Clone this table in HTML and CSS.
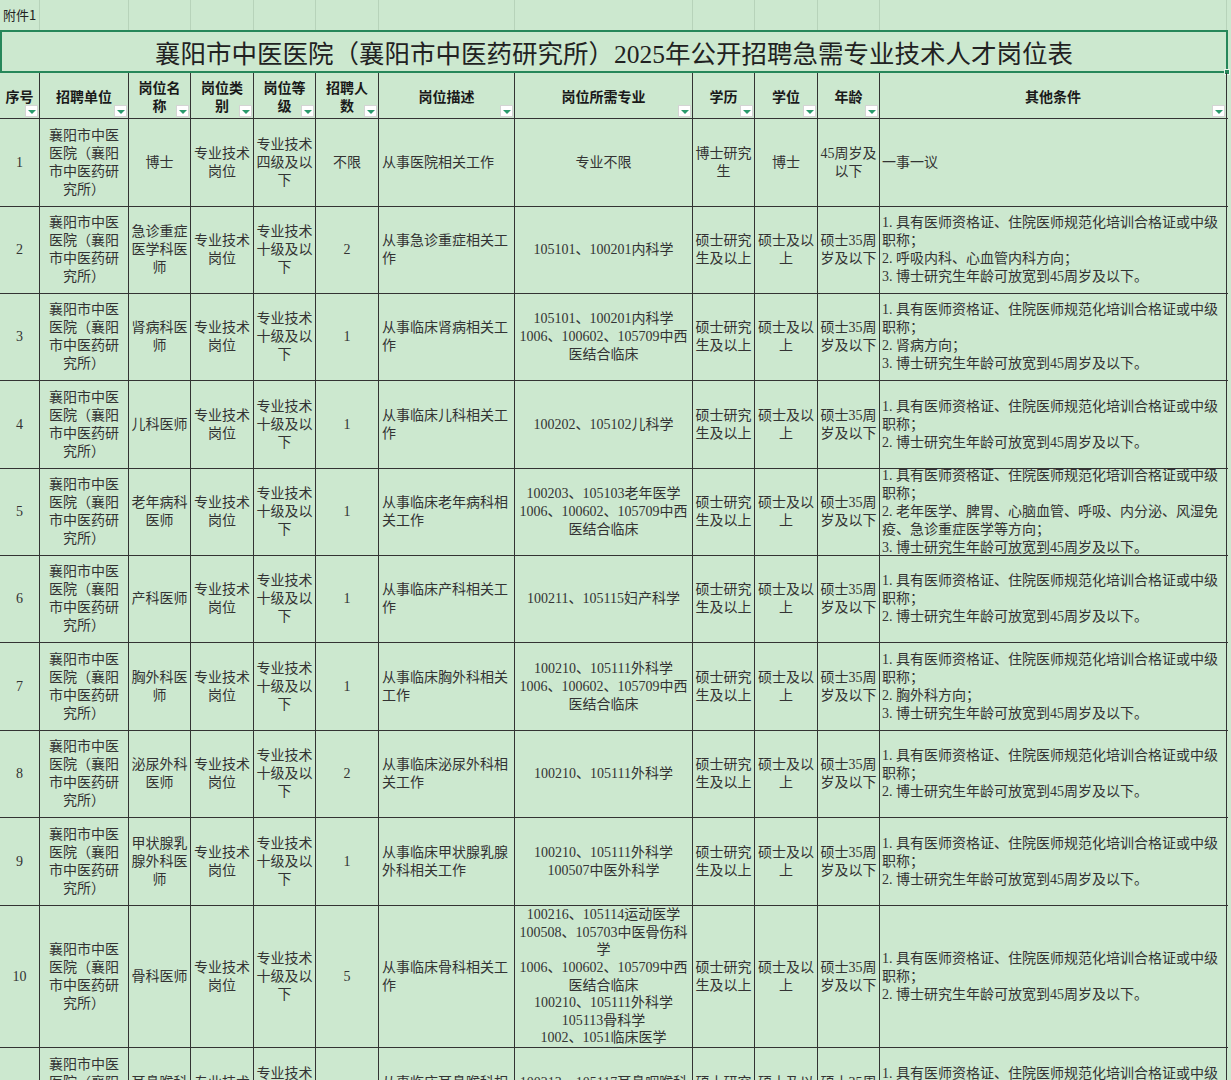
FILE: index.html
```html
<!DOCTYPE html>
<html lang="zh-CN">
<head>
<meta charset="utf-8">
<title>岗位表</title>
<link rel="stylesheet" href="styles.css">
</head>
<body>
<div class="sheet">
  <div class="row pre">
    <div class="annex">附件1</div><div></div><div></div><div></div><div></div><div></div><div></div><div></div><div></div><div></div><div></div><div></div>
  </div>
  <div class="title">襄阳市中医医院（襄阳市中医药研究所）2025年公开招聘急需专业技术人才岗位表<span class="handle"></span></div>
  <div class="row head">
    <div class="h narrow">序号<span class="f"></span></div>
    <div class="h">招聘单位<span class="f"></span></div>
    <div class="h">岗位名称<span class="f"></span></div>
    <div class="h">岗位类别<span class="f"></span></div>
    <div class="h">岗位等级<span class="f"></span></div>
    <div class="h">招聘人数<span class="f"></span></div>
    <div class="h">岗位描述<span class="f"></span></div>
    <div class="h">岗位所需专业<span class="f"></span></div>
    <div class="h">学历<span class="f"></span></div>
    <div class="h">学位<span class="f"></span></div>
    <div class="h">年龄<span class="f"></span></div>
    <div class="h">其他条件<span class="f"></span></div>
  </div>

  <div class="row data r88">
    <div class="c">1</div>
    <div class="c unit">襄阳市中医医院（襄阳市中医药研究所）</div>
    <div class="c">博士</div>
    <div class="c">专业技术岗位</div>
    <div class="c">专业技术四级及以下</div>
    <div class="c">不限</div>
    <div class="c l">从事医院相关工作</div>
    <div class="c">专业不限</div>
    <div class="c">博士研究生</div>
    <div class="c">博士</div>
    <div class="c">45周岁及以下</div>
    <div class="c o">一事一议</div>
  </div>

  <div class="row data r87">
    <div class="c">2</div>
    <div class="c unit">襄阳市中医医院（襄阳市中医药研究所）</div>
    <div class="c">急诊重症医学科医师</div>
    <div class="c">专业技术岗位</div>
    <div class="c">专业技术十级及以下</div>
    <div class="c">2</div>
    <div class="c l">从事急诊重症相关工作</div>
    <div class="c">105101、100201内科学</div>
    <div class="c">硕士研究生及以上</div>
    <div class="c">硕士及以上</div>
    <div class="c">硕士35周岁及以下</div>
    <div class="c o">1. 具有医师资格证、住院医师规范化培训合格证或中级职称；<br>2. 呼吸内科、心血管内科方向；<br>3. 博士研究生年龄可放宽到45周岁及以下。</div>
  </div>

  <div class="row data r87">
    <div class="c">3</div>
    <div class="c unit">襄阳市中医医院（襄阳市中医药研究所）</div>
    <div class="c">肾病科医师</div>
    <div class="c">专业技术岗位</div>
    <div class="c">专业技术十级及以下</div>
    <div class="c">1</div>
    <div class="c l">从事临床肾病相关工作</div>
    <div class="c">105101、100201内科学<br>1006、100602、105709中西医结合临床</div>
    <div class="c">硕士研究生及以上</div>
    <div class="c">硕士及以上</div>
    <div class="c">硕士35周岁及以下</div>
    <div class="c o">1. 具有医师资格证、住院医师规范化培训合格证或中级职称；<br>2. 肾病方向；<br>3. 博士研究生年龄可放宽到45周岁及以下。</div>
  </div>

  <div class="row data r88">
    <div class="c">4</div>
    <div class="c unit">襄阳市中医医院（襄阳市中医药研究所）</div>
    <div class="c">儿科医师</div>
    <div class="c">专业技术岗位</div>
    <div class="c">专业技术十级及以下</div>
    <div class="c">1</div>
    <div class="c l">从事临床儿科相关工作</div>
    <div class="c">100202、105102儿科学</div>
    <div class="c">硕士研究生及以上</div>
    <div class="c">硕士及以上</div>
    <div class="c">硕士35周岁及以下</div>
    <div class="c o">1. 具有医师资格证、住院医师规范化培训合格证或中级职称；<br>2. 博士研究生年龄可放宽到45周岁及以下。</div>
  </div>

  <div class="row data r87">
    <div class="c">5</div>
    <div class="c unit">襄阳市中医医院（襄阳市中医药研究所）</div>
    <div class="c">老年病科医师</div>
    <div class="c">专业技术岗位</div>
    <div class="c">专业技术十级及以下</div>
    <div class="c">1</div>
    <div class="c l">从事临床老年病科相关工作</div>
    <div class="c">100203、105103老年医学<br>1006、100602、105709中西医结合临床</div>
    <div class="c">硕士研究生及以上</div>
    <div class="c">硕士及以上</div>
    <div class="c">硕士35周岁及以下</div>
    <div class="c o">1. 具有医师资格证、住院医师规范化培训合格证或中级职称；<br>2. 老年医学、脾胃、心脑血管、呼吸、内分泌、风湿免疫、急诊重症医学等方向；<br>3. 博士研究生年龄可放宽到45周岁及以下。</div>
  </div>

  <div class="row data r87">
    <div class="c">6</div>
    <div class="c unit">襄阳市中医医院（襄阳市中医药研究所）</div>
    <div class="c">产科医师</div>
    <div class="c">专业技术岗位</div>
    <div class="c">专业技术十级及以下</div>
    <div class="c">1</div>
    <div class="c l">从事临床产科相关工作</div>
    <div class="c">100211、105115妇产科学</div>
    <div class="c">硕士研究生及以上</div>
    <div class="c">硕士及以上</div>
    <div class="c">硕士35周岁及以下</div>
    <div class="c o">1. 具有医师资格证、住院医师规范化培训合格证或中级职称；<br>2. 博士研究生年龄可放宽到45周岁及以下。</div>
  </div>

  <div class="row data r88">
    <div class="c">7</div>
    <div class="c unit">襄阳市中医医院（襄阳市中医药研究所）</div>
    <div class="c">胸外科医师</div>
    <div class="c">专业技术岗位</div>
    <div class="c">专业技术十级及以下</div>
    <div class="c">1</div>
    <div class="c l">从事临床胸外科相关工作</div>
    <div class="c">100210、105111外科学<br>1006、100602、105709中西医结合临床</div>
    <div class="c">硕士研究生及以上</div>
    <div class="c">硕士及以上</div>
    <div class="c">硕士35周岁及以下</div>
    <div class="c o">1. 具有医师资格证、住院医师规范化培训合格证或中级职称；<br>2. 胸外科方向；<br>3. 博士研究生年龄可放宽到45周岁及以下。</div>
  </div>

  <div class="row data r87">
    <div class="c">8</div>
    <div class="c unit">襄阳市中医医院（襄阳市中医药研究所）</div>
    <div class="c">泌尿外科医师</div>
    <div class="c">专业技术岗位</div>
    <div class="c">专业技术十级及以下</div>
    <div class="c">2</div>
    <div class="c l">从事临床泌尿外科相关工作</div>
    <div class="c">100210、105111外科学</div>
    <div class="c">硕士研究生及以上</div>
    <div class="c">硕士及以上</div>
    <div class="c">硕士35周岁及以下</div>
    <div class="c o">1. 具有医师资格证、住院医师规范化培训合格证或中级职称；<br>2. 博士研究生年龄可放宽到45周岁及以下。</div>
  </div>

  <div class="row data r88">
    <div class="c">9</div>
    <div class="c unit">襄阳市中医医院（襄阳市中医药研究所）</div>
    <div class="c">甲状腺乳腺外科医师</div>
    <div class="c">专业技术岗位</div>
    <div class="c">专业技术十级及以下</div>
    <div class="c">1</div>
    <div class="c l">从事临床甲状腺乳腺外科相关工作</div>
    <div class="c">100210、105111外科学<br>100507中医外科学</div>
    <div class="c">硕士研究生及以上</div>
    <div class="c">硕士及以上</div>
    <div class="c">硕士35周岁及以下</div>
    <div class="c o">1. 具有医师资格证、住院医师规范化培训合格证或中级职称；<br>2. 博士研究生年龄可放宽到45周岁及以下。</div>
  </div>

  <div class="row data r142">
    <div class="c">10</div>
    <div class="c unit">襄阳市中医医院（襄阳市中医药研究所）</div>
    <div class="c">骨科医师</div>
    <div class="c">专业技术岗位</div>
    <div class="c">专业技术十级及以下</div>
    <div class="c">5</div>
    <div class="c l">从事临床骨科相关工作</div>
    <div class="c tight">100216、105114运动医学<br>100508、105703中医骨伤科学<br>1006、100602、105709中西医结合临床<br>100210、105111外科学<br>105113骨科学<br>1002、1051临床医学</div>
    <div class="c">硕士研究生及以上</div>
    <div class="c">硕士及以上</div>
    <div class="c">硕士35周岁及以下</div>
    <div class="c o">1. 具有医师资格证、住院医师规范化培训合格证或中级职称；<br>2. 博士研究生年龄可放宽到45周岁及以下。</div>
  </div>

  <div class="row data r88">
    <div class="c">11</div>
    <div class="c unit">襄阳市中医医院（襄阳市中医药研究所）</div>
    <div class="c">耳鼻喉科医师</div>
    <div class="c">专业技术岗位</div>
    <div class="c">专业技术十级及以下</div>
    <div class="c">1</div>
    <div class="c l">从事临床耳鼻喉科相关工作</div>
    <div class="c">100213、105117耳鼻咽喉科学</div>
    <div class="c">硕士研究生及以上</div>
    <div class="c">硕士及以上</div>
    <div class="c">硕士35周岁及以下</div>
    <div class="c o">1. 具有医师资格证、住院医师规范化培训合格证或中级职称；<br>2. 博士研究生年龄可放宽到45周岁及以下。</div>
  </div>
</div>
</body>
</html>
```

FILE: styles.css
```css
html, body {
  margin: 0;
  padding: 0;
  background: #cce8cf;
}
body {
  font-family: "Liberation Serif", "Noto Sans CJK SC", serif;
  color: #333;
  width: 1231px;
  height: 1080px;
  overflow: hidden;
}
.sheet {
  width: 1228px;
}
.row {
  display: grid;
  grid-template-columns: 40px 89px 62px 63px 62px 63px 136px 178px 62px 63px 62px 347px;
}
.pre {
  height: 30px;
}
.pre > div {
  border-right: 1px solid #b7d3ba;
}
.annex {
  font-family: "Noto Sans CJK SC", sans-serif;
  font-size: 13px;
  line-height: 30px;
  padding-left: 3px;
  color: #222;
  white-space: nowrap;
}
.title {
  position: relative;
  height: 43px;
  box-sizing: border-box;
  border: 2px solid #26875a;
  display: flex;
  align-items: center;
  justify-content: center;
  font-size: 25.5px;
  color: #222;
  white-space: nowrap;
}
.handle {
  position: absolute;
  right: -4px;
  bottom: -4px;
  width: 4px;
  height: 4px;
  background: #26875a;
  border: 1px solid #e8f4ea;
}
.head {
  height: 46px;
  box-sizing: border-box;
  border-bottom: 1px solid #333;
}
.h {
  position: relative;
  box-sizing: border-box;
  border-right: 1px solid #333;
  display: flex;
  align-items: center;
  justify-content: center;
  text-align: center;
  padding: 0 6px;
  font-family: "Noto Sans CJK SC", sans-serif;
  font-weight: bold;
  font-size: 14px;
  line-height: 18px;
  color: #1a1a1a;
}
.h.narrow {
  padding: 0;
  white-space: nowrap;
}
.f {
  position: absolute;
  right: 1px;
  bottom: 1px;
  width: 13px;
  height: 12px;
  box-sizing: border-box;
  background: #fff;
  border: 1px solid #d4d4d4;
}
.f::after {
  content: "";
  position: absolute;
  left: 2px;
  top: 4px;
  border-left: 4px solid transparent;
  border-right: 4px solid transparent;
  border-top: 4px solid #2a9a6c;
}
.data {
  box-sizing: border-box;
  border-bottom: 1px solid #333;
}
.r87 { height: 87px; }
.r88 { height: 88px; }
.r142 { height: 142px; }
.c {
  box-sizing: border-box;
  border-right: 1px solid #333;
  display: flex;
  align-items: center;
  justify-content: center;
  text-align: center;
  overflow: hidden;
  padding: 0 2px;
  font-size: 14px;
  line-height: 18px;
  color: #333;
}
.c.unit {
  padding: 0 8px;
}
.c.l {
  justify-content: flex-start;
  text-align: left;
  padding-left: 3px;
}
.c.o {
  justify-content: flex-start;
  text-align: left;
  padding-left: 2px;
  padding-right: 1px;
}
.c.tight {
  line-height: 17.6px;
}
```
